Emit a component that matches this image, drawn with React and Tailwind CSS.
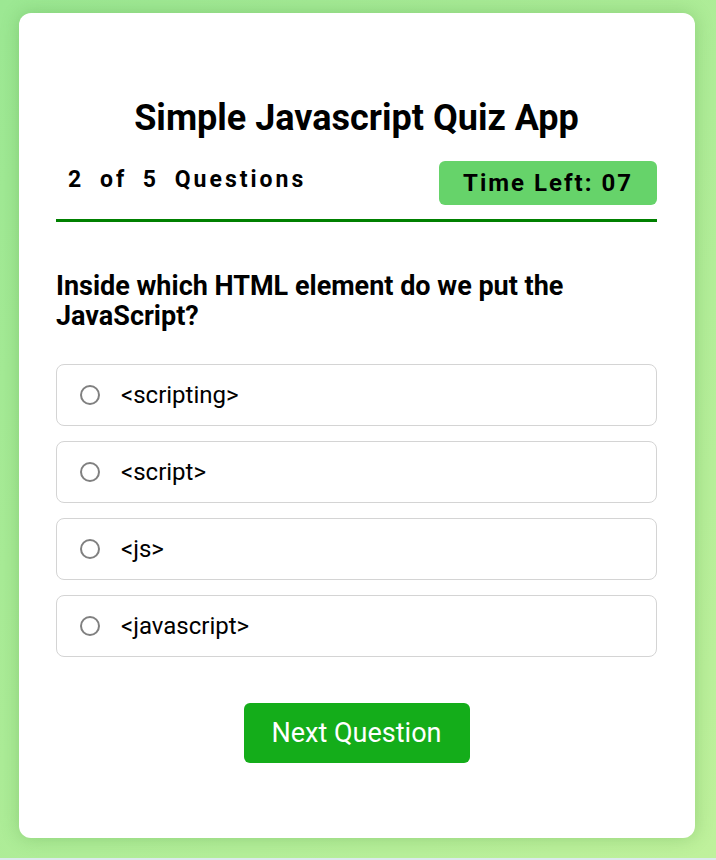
import React, { useState } from 'react';

const options = ['<scripting>', '<script>', '<js>', '<javascript>'];

const App = () => {
    const [selected, setSelected] = useState(null);

    return (
        <div className="min-h-screen bg-[#dce9ed]" style={{ fontFamily: 'Roboto, "Liberation Sans", sans-serif' }}>
            <div className="h-[858px] bg-gradient-to-br from-[#9ce893] to-[#bff19c] pl-[19px] pr-[21px] pt-[13px]">
                {/* Card */}
                <div className="bg-white rounded-[12px] shadow-[0_0_18px_rgba(40,120,30,0.25)] pl-[37px] pr-[38px] pt-[78px] pb-[75px]">
                    <h1 className="text-[36px] font-bold text-black text-center leading-normal">
                        Simple Javascript Quiz App
                    </h1>

                    {/* Header */}
                    <div className="mt-[16px] flex items-center justify-between pb-[14px] border-b-[3px] border-[#008000]">
                        <p className="pl-3 mb-[6px] text-[23px] font-bold tracking-[3px] text-black [word-spacing:7px]">
                            2 of 5 Questions
                        </p>
                        <div className="h-[44px] w-[218px] flex items-center justify-center rounded-[6px] bg-[#66d36a] text-[24px] font-bold tracking-[2px] text-black">
                            Time Left: 07
                        </div>
                    </div>

                    {/* Question */}
                    <h2 className="mt-[49px] text-[27px] font-bold leading-[30px] text-black">
                        Inside which HTML element do we put the JavaScript?
                    </h2>

                    <div className="mt-[33px] flex flex-col gap-[15px]">
                        {options.map((opt, i) => (
                            <label
                                key={opt}
                                onClick={() => setSelected(i)}
                                className="h-[62px] flex items-center border border-[#d4d4d4] rounded-[8px] pl-[23px] cursor-pointer"
                            >
                                <span className="w-[20px] h-[20px] rounded-full border-2 border-[#808080] flex items-center justify-center">
                                    {selected === i && <span className="w-[11px] h-[11px] rounded-full bg-[#0075ff]" />}
                                </span>
                                <span className="ml-[21px] text-[24px] text-black">{opt}</span>
                            </label>
                        ))}
                    </div>

                    <div className="mt-[46px] flex justify-center">
                        <button className="w-[226px] h-[60px] rounded-[6px] bg-[#14ad1a] text-white text-[27px]">
                            Next Question
                        </button>
                    </div>
                </div>
            </div>
        </div>
    );
};

export default App;
